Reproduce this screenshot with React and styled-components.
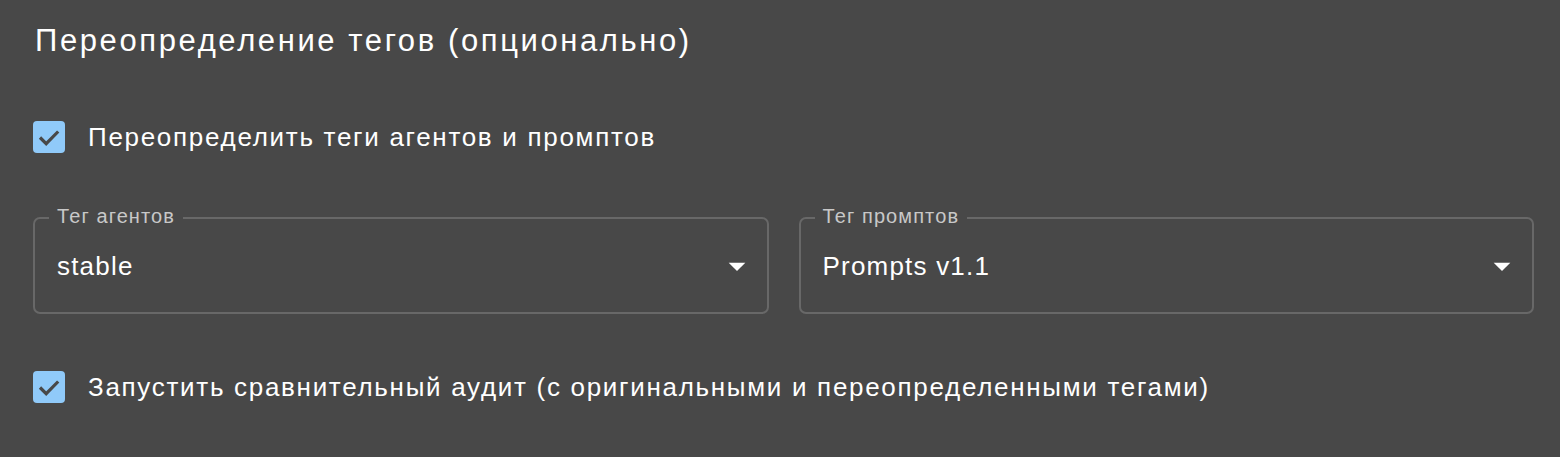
import React from "react";
import styled, { createGlobalStyle } from "styled-components";

const GlobalStyle = createGlobalStyle`
  html, body { margin: 0; padding: 0; background: #484848; }
  body { font-family: "Liberation Sans", Arial, Helvetica, sans-serif; }
  * { box-sizing: border-box; }
`;

const Page = styled.div`
  width: 1560px;
  height: 457px;
  background: #484848;
  padding: 0 26px 0 33px;
  display: flex;
  flex-direction: column;
  color: #fff;
`;

const Title = styled.h2`
  margin: 23px 0 0 2px;
  font-size: 31px;
  line-height: 36px;
  font-weight: 400;
  letter-spacing: 2.6px;
  color: #fff;
`;

const CheckRow = styled.label`
  display: flex;
  align-items: center;
  gap: 23px;
  height: 32px;
  margin-top: ${(p) => p.$mt}px;
`;

const CheckText = styled.span`
  font-size: 26px;
  line-height: 32px;
  letter-spacing: 1.7px;
  color: #fff;
`;

const Box = styled.svg`
  width: 32px;
  height: 32px;
  flex: none;
  display: block;
`;

const Fields = styled.div`
  display: grid;
  grid-template-columns: 1fr 1fr;
  gap: 30px;
  margin-top: 64px;
`;

const Field = styled.div`
  position: relative;
  height: 97px;
  border: 2px solid #686868;
  border-radius: 7px;
  display: flex;
  align-items: center;
  padding: 0 10px 0 22px;
`;

const FieldLabel = styled.span`
  position: absolute;
  top: -15px;
  left: 14px;
  padding: 0 8px;
  background: #484848;
  font-size: 20px;
  line-height: 24px;
  letter-spacing: 1.1px;
  color: #c8c8c8;
`;

const Value = styled.span`
  flex: 1;
  font-size: 26px;
  line-height: 32px;
  letter-spacing: 1.2px;
  color: #fff;
`;

const Arrow = styled.svg`
  width: 40px;
  height: 40px;
  flex: none;
  display: block;
`;

function Checkbox() {
  return (
    <Box viewBox="0 0 32 32">
      <rect x="0" y="0" width="32" height="32" rx="4" fill="#90caf9" />
      <polyline
        points="7,16.5 13.2,22.7 25.2,10.5"
        fill="none"
        stroke="#484848"
        strokeWidth="3.2"
      />
    </Box>
  );
}

function Select({ label, value }) {
  return (
    <Field>
      <FieldLabel>{label}</FieldLabel>
      <Value>{value}</Value>
      <Arrow viewBox="0 0 24 24">
        <path d="M7 10l5 5 5-5z" fill="#fff" />
      </Arrow>
    </Field>
  );
}

export default function App() {
  return (
    <>
      <GlobalStyle />
      <Page>
        <Title>Переопределение тегов (опционально)</Title>
        <CheckRow $mt={62}>
          <Checkbox />
          <CheckText>Переопределить теги агентов и промптов</CheckText>
        </CheckRow>
        <Fields>
          <Select label="Тег агентов" value="stable" />
          <Select label="Тег промптов" value="Prompts v1.1" />
        </Fields>
        <CheckRow $mt={57}>
          <Checkbox />
          <CheckText>
            Запустить сравнительный аудит (с оригинальными и переопределенными тегами)
          </CheckText>
        </CheckRow>
      </Page>
    </>
  );
}
